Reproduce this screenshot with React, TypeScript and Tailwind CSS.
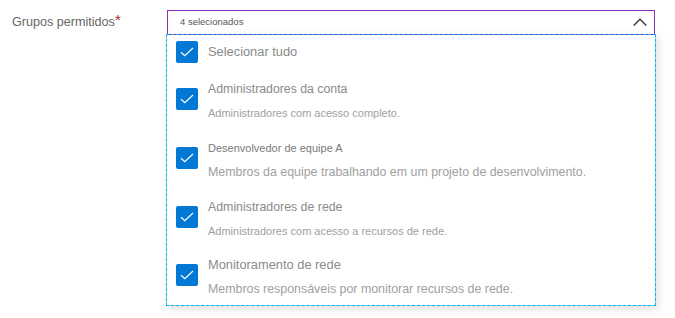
import React from "react";

type Item = {
  title: string;
  desc: string;
  titleCls: string;
  descCls: string;
};

const items: Item[] = [
  {
    title: "Administradores da conta",
    desc: "Administradores com acesso completo.",
    titleCls: "text-[12.3px] text-[#8a8a8a]",
    descCls: "text-[11px] text-[#a0a0a0]",
  },
  {
    title: "Desenvolvedor de equipe A",
    desc: "Membros da equipe trabalhando em um projeto de desenvolvimento.",
    titleCls: "text-[11px] text-[#7a7a7a]",
    descCls: "text-[12.4px] text-[#a0a0a0]",
  },
  {
    title: "Administradores de rede",
    desc: "Administradores com acesso a recursos de rede.",
    titleCls: "text-[12.35px] text-[#8a8a8a]",
    descCls: "text-[11px] text-[#a0a0a0]",
  },
  {
    title: "Monitoramento de rede",
    desc: "Membros responsáveis por monitorar recursos de rede.",
    titleCls: "text-[12.85px] text-[#8a8a8a]",
    descCls: "text-[12.4px] text-[#a0a0a0]",
  },
];

function Box() {
  return (
    <div className="w-[22px] h-[22px] shrink-0 rounded-[2px] bg-[#0078d4] flex items-center justify-center">
      <svg width="14" height="10" viewBox="0 0 14 10" fill="none">
        <path d="M1 5.2 L4.8 8.6 L13 1" stroke="white" strokeWidth="1.2" />
      </svg>
    </div>
  );
}

export default function App() {
  return (
    <div
      className="w-[675px] h-[318px] bg-white flex pt-[10px] pl-[12px]"
      style={{ fontFamily: '"Segoe UI", "Liberation Sans", Arial, sans-serif' }}
    >
      <div className="w-[154px] shrink-0 text-[12.6px] text-[#666] leading-[24px] h-[24px]">
        Grupos permitidos<span className="text-[#b3242c] text-[15px] leading-[10px] align-[1px]">*</span>
      </div>
      <div className="w-[490px] flex flex-col">
        <div className="h-[25px] border border-[#8a2db8] mx-[1px] flex items-center justify-between pl-[12px] pr-[7px] pb-[1px]">
          <span className="text-[9.5px] text-[#555]">4 selecionados</span>
          <svg width="14" height="8" viewBox="0 0 14 8" fill="none" className="mt-[-1px]">
            <path d="M0.7 7.5 L7 1.2 L13.3 7.5" stroke="#333" strokeWidth="1.3" />
          </svg>
        </div>
        <div className="relative -mt-[1px] bg-white bg-clip-padding border border-solid border-[#8ad8f6] border-t-transparent outline outline-dashed outline-1 outline-[#0cb2f0] -outline-offset-1 h-[272px] shadow-[2px_3px_8px_rgba(0,0,0,0.13)] flex flex-col pl-[9px]">
          <div className="h-[34px] flex items-center gap-[10px]">
            <Box />
            <span className="text-[12.85px] text-[#8a8a8a]">Selecionar tudo</span>
          </div>
          {items.map((it, i) => (
            <div
              key={i}
              className={`${i === 3 ? "h-[58px]" : "h-[59px]"} flex items-center gap-[10px]`}
            >
              <Box />
              <div className="flex flex-col mt-[4px]">
                <div className={`${it.titleCls} leading-[20px]`}>{it.title}</div>
                <div className={`${it.descCls} leading-[20px] mt-[4px]`}>{it.desc}</div>
              </div>
            </div>
          ))}
        </div>
      </div>
    </div>
  );
}
